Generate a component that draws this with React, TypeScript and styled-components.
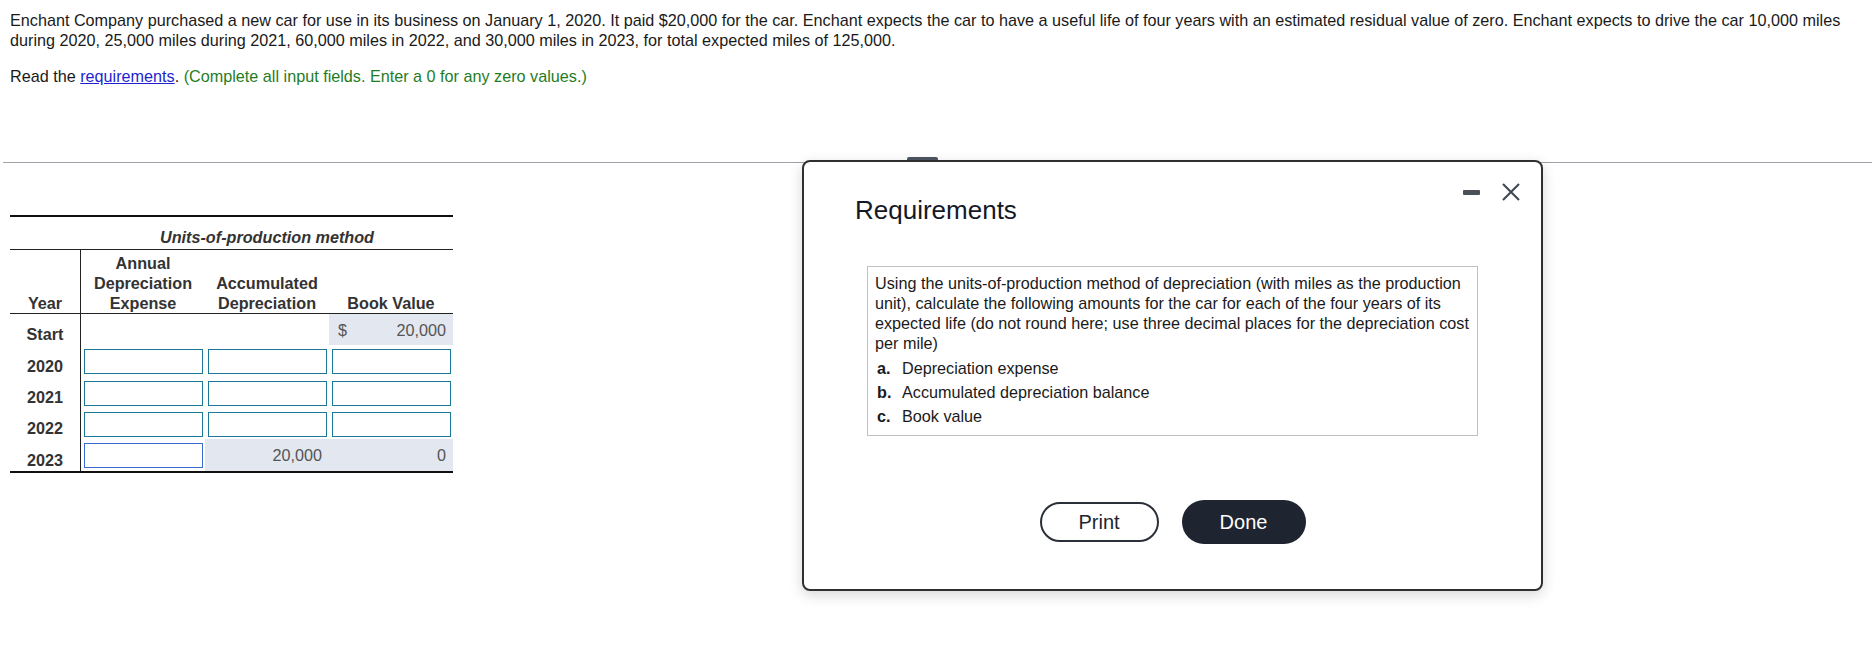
import styled, { createGlobalStyle } from 'styled-components';

const GlobalStyle = createGlobalStyle`
  html, body {
    margin:0;
    padding:0;
    background:#fff;
  }
  body {
    font-family:"Liberation Sans", Arial, sans-serif;
    font-size:16.2px;
    line-height:20px;
    color:#1a1a1a;
  }
`

const Page = styled.div`
  position:relative;
  width:1872px;
  min-height:646px;
`

const Intro = styled.div`
  padding:10px 12px 0 10px;
`

const Para = styled.p`
  margin:0;
  & + & {
    margin-top:16px;
  }
`

const Link = styled.a`
  color:#1f1fd0;
  text-decoration:underline;
  cursor:pointer;
`

const Hint = styled.span`
  color:#1f7d1f;
`

const Divider = styled.div`
  margin:76px 0 0 3px;
  height:1px;
  background:#9ea3a9;
`

const TableArea = styled.div`
  padding:52px 0 0 10px;
`

// track heights include the cell borders
const Table = styled.div`
  display:grid;
  grid-template-columns:71px repeat(3, 124px);
  grid-template-rows:33px 64px 31px 32px 31px 31px 32px;
  width:443px;
  border-top:2px solid #111;
  border-bottom:2px solid #111;
  color:#333;
`

const TitleCell = styled.div`
  grid-column:1 / -1;
  padding:10px 0 0 71px;
  border-bottom:1px solid #222;
  font-weight:bold;
  font-style:italic;
  text-align:center;
`

const HeadCell = styled.div<{ $first?: boolean }>`
  display:flex;
  align-items:flex-end;
  justify-content:center;
  text-align:center;
  font-weight:bold;
  border-bottom:1px solid #222;
  border-right:${p => (p.$first ? '1px solid #222' : 'none')};
`

const YearCell = styled.div`
  display:flex;
  align-items:flex-end;
  justify-content:center;
  padding-bottom:1px;
  font-weight:bold;
  border-right:1px solid #222;
`

const Cell = styled.div`
  display:flex;
  align-items:flex-start;
  padding:4px 2px 0 3px;
`

const ValueCell = styled.div`
  display:flex;
  align-items:center;
  justify-content:space-between;
  padding:0 7px 0 9px;
  background:#e2e7f0;
  color:#555;
`

const Input = styled.input<{ $focus?: boolean }>`
  box-sizing:border-box;
  width:100%;
  height:25px;
  margin:0;
  padding:0 4px;
  border:1px solid ${p => (p.$focus ? '#3a6bd1' : '#1b7897')};
  border-radius:0;
  background:#fff;
  font:inherit;
  outline:none;
`

const Modal = styled.div`
  position:absolute;
  left:802px;
  top:160px;
  width:741px;
  height:431px;
  box-sizing:border-box;
  display:flex;
  flex-direction:column;
  background:#fff;
  border:2px solid #2f2f2f;
  border-radius:8px;
  box-shadow:0 4px 14px rgba(0,0,0,0.16);
  z-index:2;
`

const Handle = styled.span`
  position:absolute;
  left:103px;
  top:-5px;
  width:31px;
  height:3px;
  border-radius:2px 2px 0 0;
  background:#4b5360;
`

const ModalHeader = styled.div`
  display:flex;
  justify-content:space-between;
  align-items:flex-start;
  padding:0 21px 0 51px;
`

const ModalTitle = styled.h2`
  margin:33px 0 0;
  font-size:26px;
  line-height:30px;
  font-weight:normal;
  color:#141826;
`

const Controls = styled.div`
  display:flex;
  align-items:center;
  gap:22px;
  height:18px;
  margin-top:21px;
`

const MinimizeBar = styled.span`
  display:block;
  width:17px;
  height:5px;
  border-radius:1px;
  background:#4b5057;
`

const ReqBox = styled.div`
  margin:41px 0 0 63px;
  width:611px;
  box-sizing:border-box;
  padding:6px 3px 7px 7px;
  border:1px solid #c2c2c2;
  color:#1a1a1a;
`

const ReqList = styled.ul`
  list-style:none;
  margin:3px 0 0;
  padding:0 0 0 2px;
`

const ReqItem = styled.li`
  display:flex;
  line-height:24px;
`

const ReqLabel = styled.span`
  font-weight:bold;
  min-width:25px;
`

const ButtonRow = styled.div`
  display:flex;
  justify-content:center;
  align-items:center;
  gap:23px;
  margin-top:64px;
`

const Button = styled.button<{ $primary?: boolean }>`
  box-sizing:border-box;
  width:${p => (p.$primary ? '124px' : '119px')};
  height:${p => (p.$primary ? '44px' : '40px')};
  border-radius:22px;
  border:${p => (p.$primary ? 'none' : '2px solid #2b3038')};
  background:${p => (p.$primary ? '#1e2430' : '#fff')};
  color:${p => (p.$primary ? '#fff' : '#1e2430')};
  font-family:"Liberation Sans", Arial, sans-serif;
  font-size:20px;
  cursor:pointer;
`

const years = ['2020', '2021', '2022']

export default function App() {
  return (
    <Page>
      <GlobalStyle />
      <Intro>
        <Para>
          Enchant Company purchased a new car for use in its business on January 1, 2020. It paid $20,000 for the car. Enchant expects the car to have a useful life of four years with an estimated residual value of zero. Enchant expects to drive the car 10,000 miles during 2020, 25,000 miles during 2021, 60,000 miles in 2022, and 30,000 miles in 2023, for total expected miles of 125,000.
        </Para>
        <Para>
          Read the <Link>requirements</Link>. <Hint>(Complete all input fields. Enter a 0 for any zero values.)</Hint>
        </Para>
      </Intro>
      <Divider />
      <TableArea>
        <Table>
          <TitleCell>Units-of-production method</TitleCell>
          <HeadCell $first>Year</HeadCell>
          <HeadCell>Annual Depreciation Expense</HeadCell>
          <HeadCell>Accumulated Depreciation</HeadCell>
          <HeadCell>Book Value</HeadCell>

          <YearCell>Start</YearCell>
          <Cell />
          <Cell />
          <ValueCell><span>$</span><span>20,000</span></ValueCell>

          {years.map(y => [
            <YearCell key={y}>{y}</YearCell>,
            <Cell key={y + 'a'}><Input /></Cell>,
            <Cell key={y + 'b'}><Input /></Cell>,
            <Cell key={y + 'c'}><Input /></Cell>,
          ])}

          <YearCell>2023</YearCell>
          <Cell><Input $focus /></Cell>
          <ValueCell><span /><span>20,000</span></ValueCell>
          <ValueCell><span /><span>0</span></ValueCell>
        </Table>
      </TableArea>

      <Modal>
        <Handle />
        <ModalHeader>
          <ModalTitle>Requirements</ModalTitle>
          <Controls>
            <MinimizeBar />
            <svg width="18" height="18" viewBox="0 0 18 18">
              <path d="M1 1 L17 17 M17 1 L1 17" stroke="#3c4650" strokeWidth="2" fill="none" />
            </svg>
          </Controls>
        </ModalHeader>
        <ReqBox>
          <div>
            Using the units-of-production method of depreciation (with miles as the production unit), calculate the following amounts for the car for each of the four years of its expected life (do not round here; use three decimal places for the depreciation cost per mile)
          </div>
          <ReqList>
            <ReqItem><ReqLabel>a.</ReqLabel>Depreciation expense</ReqItem>
            <ReqItem><ReqLabel>b.</ReqLabel>Accumulated depreciation balance</ReqItem>
            <ReqItem><ReqLabel>c.</ReqLabel>Book value</ReqItem>
          </ReqList>
        </ReqBox>
        <ButtonRow>
          <Button>Print</Button>
          <Button $primary>Done</Button>
        </ButtonRow>
      </Modal>
    </Page>
  );
}
